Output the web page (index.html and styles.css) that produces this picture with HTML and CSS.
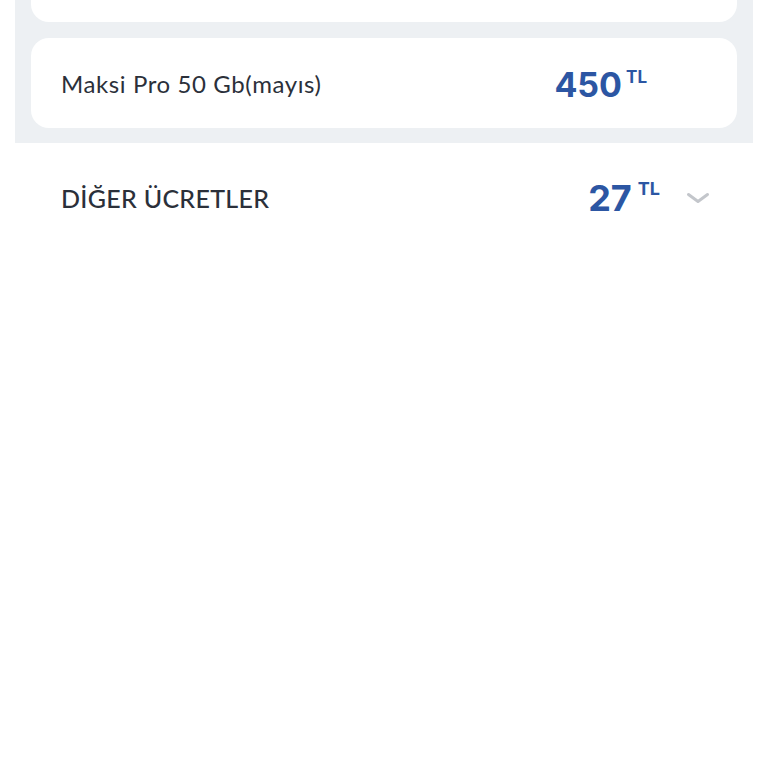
FILE: index.html
```html
<!DOCTYPE html>
<html lang="tr">
<head>
    <meta charset="UTF-8">
    <meta name="viewport" content="width=device-width, initial-scale=1.0">
    <title>Fatura Detayı</title>
    <link rel="stylesheet" href="styles.css">
</head>
<body>
    <div class="panel">
        <div class="card card-cut"></div>
        <div class="card">
            <span class="item-name">Maksi Pro 50 Gb(mayıs)</span>
            <span class="price">450<sup>TL</sup></span>
        </div>
    </div>

    <div class="section-row">
        <span class="section-title">DİĞER ÜCRETLER</span>
        <span class="price price-large">27<sup>TL</sup></span>
        <svg class="chevron" width="24" height="12" viewBox="0 0 24 12">
            <path d="M2.5 2.5 L12 9.5 L21.5 2.5" fill="none" stroke="#c3c6cb" stroke-width="3" stroke-linecap="round" stroke-linejoin="round"/>
        </svg>
    </div>
</body>
</html>
```

FILE: styles.css
```css
body {
    margin: 0;
    background-color: #fff;
    font-family: Lato, 'Noto Sans', sans-serif;
    color: #2b303a;
}
.panel {
    margin: 0 15px;
    padding: 0 16px 15px;
    background-color: #edf0f3;
    display: flex;
    flex-direction: column;
    gap: 16px;
}
.card {
    height: 90px;
    background-color: #fff;
    border-radius: 18px;
    display: flex;
    align-items: center;
    justify-content: space-between;
    padding: 0 90px 0 30px;
}
.card-cut {
    margin-top: -68px;
}
.item-name {
    font-size: 24px;
    letter-spacing: 0.6px;
}
.price {
    font-family: Inter, 'Noto Sans', sans-serif;
    font-weight: 700;
    font-size: 34px;
    color: #2c56a3;
    line-height: 1;
    padding-top: 3px;
}
.price sup {
    font-size: 17px;
    margin-left: 4px;
    vertical-align: 14px;
}
.section-row {
    height: 110px;
    display: flex;
    align-items: center;
    padding: 0 58px 0 61px;
}
.section-title {
    flex: 1;
    font-size: 25px;
    font-weight: 500;
    letter-spacing: 0.3px;
}
.price-large {
    font-size: 36px;
    padding-top: 0;
}
.price-large sup {
    font-size: 18px;
    margin-left: 6px;
    vertical-align: 16px;
}
.chevron {
    margin-left: 26px;
}
```
